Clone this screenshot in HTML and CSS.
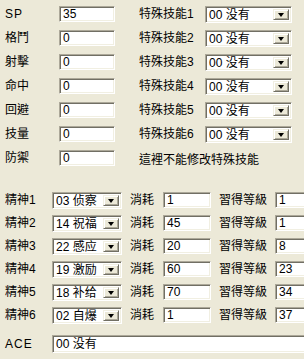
FILE: index.html
```html
<!DOCTYPE html>
<html>
<head>
<meta charset="utf-8">
<link rel="stylesheet" href="styles.css">
</head>
<body>
<div class="form">
  <div class="top">
    <span class="lbl lat">SP</span><div class="edit">35</div>
    <span class="lbl2">特殊技能1</span><div class="combo"><span class="val">00 没有</span><span class="btn"><i></i></span></div>

    <span class="lbl">格鬥</span><div class="edit">0</div>
    <span class="lbl2">特殊技能2</span><div class="combo"><span class="val">00 没有</span><span class="btn"><i></i></span></div>

    <span class="lbl">射擊</span><div class="edit">0</div>
    <span class="lbl2">特殊技能3</span><div class="combo"><span class="val">00 没有</span><span class="btn"><i></i></span></div>

    <span class="lbl">命中</span><div class="edit">0</div>
    <span class="lbl2">特殊技能4</span><div class="combo"><span class="val">00 没有</span><span class="btn"><i></i></span></div>

    <span class="lbl">回避</span><div class="edit">0</div>
    <span class="lbl2">特殊技能5</span><div class="combo"><span class="val">00 没有</span><span class="btn"><i></i></span></div>

    <span class="lbl">技量</span><div class="edit">0</div>
    <span class="lbl2">特殊技能6</span><div class="combo"><span class="val">00 没有</span><span class="btn"><i></i></span></div>

    <span class="lbl">防禦</span><div class="edit">0</div>
    <span class="note">這裡不能修改特殊技能</span>
  </div>

  <div class="bottom">
    <span class="lbl">精神1</span><div class="combo sm"><span class="val">03 侦察</span><span class="btn"><i></i></span></div>
    <span class="lbl3">消耗</span><div class="edit">1</div>
    <span class="lbl4">習得等級</span><div class="edit cut">1</div>

    <span class="lbl">精神2</span><div class="combo sm"><span class="val">14 祝福</span><span class="btn"><i></i></span></div>
    <span class="lbl3">消耗</span><div class="edit">45</div>
    <span class="lbl4">習得等級</span><div class="edit cut">1</div>

    <span class="lbl">精神3</span><div class="combo sm"><span class="val">22 感应</span><span class="btn"><i></i></span></div>
    <span class="lbl3">消耗</span><div class="edit">20</div>
    <span class="lbl4">習得等級</span><div class="edit cut">8</div>

    <span class="lbl">精神4</span><div class="combo sm"><span class="val">19 激励</span><span class="btn"><i></i></span></div>
    <span class="lbl3">消耗</span><div class="edit">60</div>
    <span class="lbl4">習得等級</span><div class="edit cut">23</div>

    <span class="lbl">精神5</span><div class="combo sm"><span class="val">18 补给</span><span class="btn"><i></i></span></div>
    <span class="lbl3">消耗</span><div class="edit">70</div>
    <span class="lbl4">習得等級</span><div class="edit cut">34</div>

    <span class="lbl">精神6</span><div class="combo sm"><span class="val">02 自爆</span><span class="btn"><i></i></span></div>
    <span class="lbl3">消耗</span><div class="edit">1</div>
    <span class="lbl4">習得等級</span><div class="edit cut">37</div>

    <span class="lbl lat ace">ACE</span><div class="edit wide cut ace">00 没有</div>
  </div>
</div>
</body>
</html>
```

FILE: styles.css
```css
html, body {
  margin: 0;
  padding: 0;
  background: #ECE9D8;
  width: 304px;
  height: 359px;
  overflow: hidden;
}

.form {
  font-family: "Liberation Sans", "Noto Sans CJK TC", sans-serif;
  font-size: 12px;
  color: #000;
  width: 304px;
}

.top {
  display: grid;
  grid-template-columns: 54px 56px 24px 66px 87px;
  grid-auto-rows: 16px;
  row-gap: 8px;
  padding: 6px 0 0 5px;
  align-items: center;
}

.bottom {
  display: grid;
  grid-template-columns: 47px 70px 8px 33px 48px 8px 56px 1fr;
  grid-auto-rows: 16px;
  row-gap: 7px;
  padding: 26px 0 0 5px;
  align-items: center;
}

.lbl, .lbl2, .lbl3, .lbl4, .note {
  white-space: nowrap;
  line-height: 16px;
}

.lbl { grid-column: 1; }
.lat { letter-spacing: 1px; }
.top .lbl2 { grid-column: 4; }
.top .edit { grid-column: 2; }
.top .combo { grid-column: 5; }
.note { grid-column: 4 / 6; padding-top: 4px; }

.bottom .combo { grid-column: 2; }
.bottom .lbl3 { grid-column: 4; }
.bottom .lbl3 + .edit { grid-column: 5; }
.bottom .lbl4 { grid-column: 7; }
.bottom .lbl4 + .edit { grid-column: 8; }
.bottom .ace { margin-top: 12px; }
.bottom .wide { grid-column: 2 / 9; height: 18px; line-height: 16px; }

.edit, .combo {
  box-sizing: border-box;
  height: 16px;
  background: #fff;
  border: 1px solid;
  border-color: #ACA899 #fff #fff #ACA899;
  box-shadow: inset 1px 1px 0 #716F64, inset -1px -1px 0 #F1EFE2;
  line-height: 14px;
  padding-left: 3px;
  white-space: nowrap;
  overflow: hidden;
  font-family: "Liberation Sans", "Noto Sans CJK SC", sans-serif;
}

.edit.cut {
  border-right: none;
  box-shadow: inset 1px 1px 0 #716F64, inset 0 -1px 0 #F1EFE2;
}

.combo {
  display: flex;
  height: 17px;
  padding: 2px 2px 2px 2px;
}

.val { flex: 1; line-height: 13px; padding-left: 1px; }

.btn {
  flex: none;
  width: 16px;
  box-sizing: border-box;
  background: #ECE9D8;
  border: 1px solid;
  border-color: #F1EFE2 #716F64 #716F64 #F1EFE2;
  box-shadow: inset 1px 1px 0 #fff, inset -1px -1px 0 #ACA899;
  display: flex;
  align-items: center;
  justify-content: center;
}

.btn i {
  display: block;
  width: 0;
  height: 0;
  border-left: 3.5px solid transparent;
  border-right: 3.5px solid transparent;
  border-top: 4px solid #000;
  margin-top: 1px;
}
```
